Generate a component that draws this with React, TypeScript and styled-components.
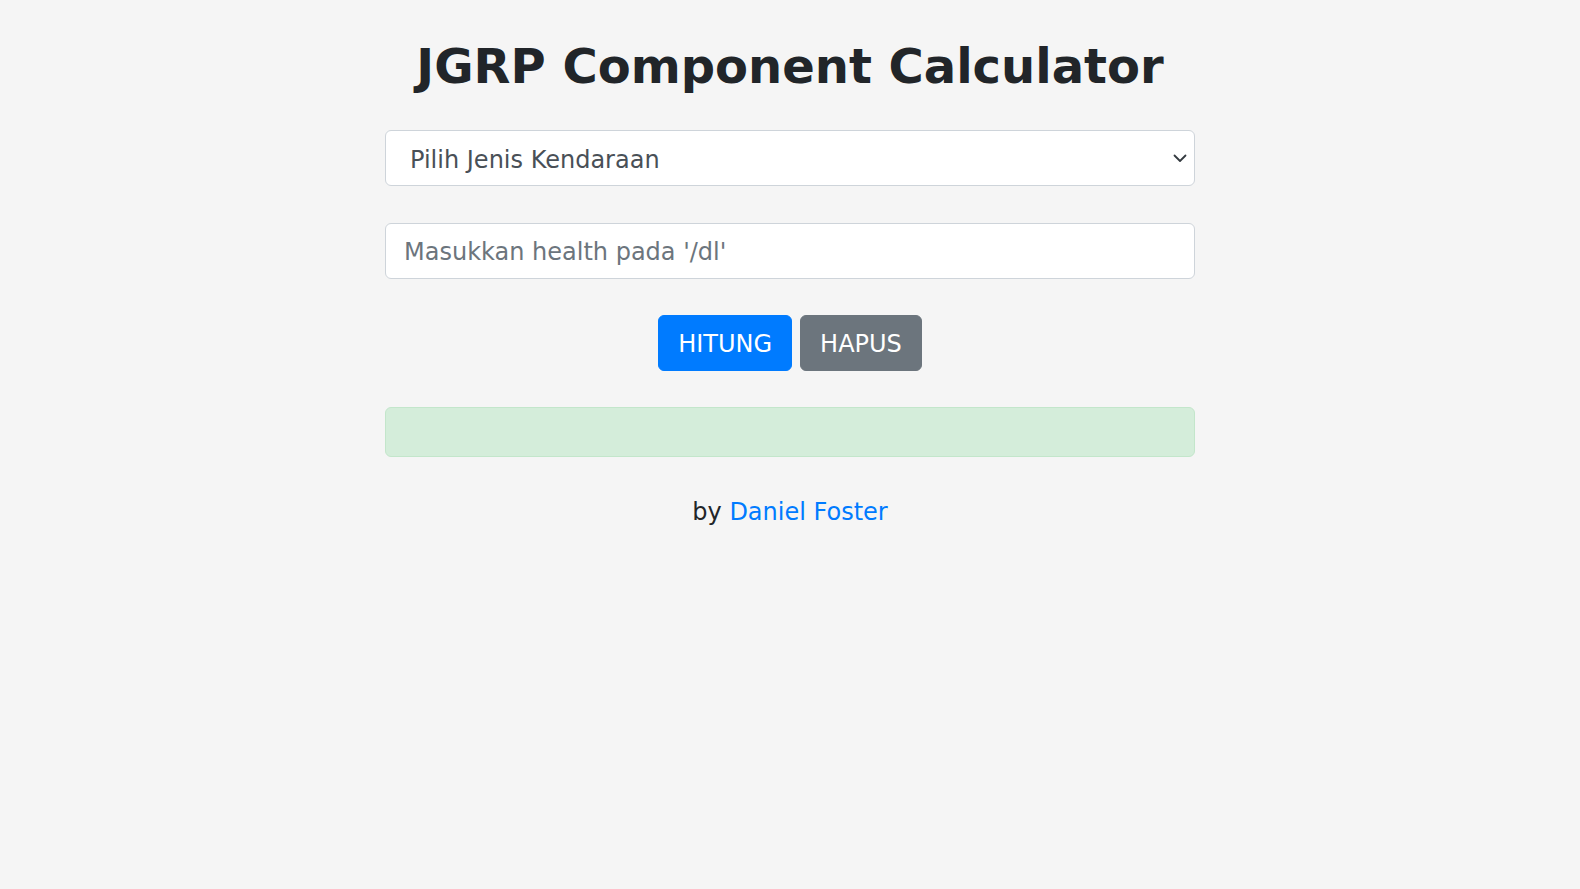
import React, { useState } from 'react';
import styled, { createGlobalStyle } from 'styled-components';

const GlobalStyle = createGlobalStyle`
  html, body {
    margin: 0;
    padding: 0;
    background: #f5f5f5;
    font-family: "DejaVu Sans", Verdana, sans-serif;
    color: #212529;
  }
  * { box-sizing: border-box; }
`;

const Page = styled.main`
  min-height: 100vh;
  display: flex;
  justify-content: center;
  padding-top: 38px;
`;

const Container = styled.div`
  width: 810px;
  display: flex;
  flex-direction: column;
`;

const Title = styled.h1`
  margin: 0 0 34px;
  font-size: 48px;
  line-height: 1.2;
  font-weight: 700;
  text-align: center;
  color: #212529;
`;

const SelectWrap = styled.div`
  position: relative;
  margin-bottom: 37px;
`;

const Select = styled.select`
  appearance: none;
  width: 100%;
  height: 56px;
  padding: 11px 40px 7px 24px;
  font-family: inherit;
  font-size: 24px;
  line-height: 1.5;
  color: #495057;
  background: #fff;
  border: 1px solid #ced4da;
  border-radius: 6px;
`;

const Chevron = styled.svg`
  position: absolute;
  right: 7px;
  top: 50%;
  width: 16px;
  height: 16px;
  transform: translateY(-50%);
  pointer-events: none;
`;

const Input = styled.input`
  width: 100%;
  height: 56px;
  padding: 10px 18px 8px;
  font-family: inherit;
  font-size: 24px;
  line-height: 1.5;
  color: #495057;
  background: #fff;
  border: 1px solid #ced4da;
  border-radius: 6px;
  margin-bottom: 36px;

  &::placeholder {
    color: #6c757d;
  }
`;

const Buttons = styled.div`
  display: flex;
  justify-content: center;
  gap: 8px;
  margin-bottom: 36px;
`;

const Button = styled.button<{ $variant: 'primary' | 'secondary' }>`
  height: 56px;
  padding: 10px 19px 8px;
  font-family: inherit;
  font-size: 24px;
  line-height: 1.5;
  color: #fff;
  border-radius: 6px;
  cursor: pointer;
  background: ${(p) => (p.$variant === 'primary' ? '#007bff' : '#6c757d')};
  border: 1px solid ${(p) => (p.$variant === 'primary' ? '#007bff' : '#6c757d')};
`;

const Result = styled.div`
  height: 50px;
  padding: 12px 24px;
  background: #d4edda;
  border: 1px solid #c3e6cb;
  border-radius: 6px;
  color: #155724;
  font-size: 24px;
  margin-bottom: 37px;
`;

const Footer = styled.p`
  margin: 0;
  text-align: center;
  font-size: 24px;
  line-height: 1.5;
  color: #212529;
`;

const Link = styled.a`
  color: #007bff;
  text-decoration: none;
`;

export default function App() {
  const [vehicle, setVehicle] = useState('');
  const [health, setHealth] = useState('');
  const [result, setResult] = useState('');

  return (
    <>
      <GlobalStyle />
      <Page>
        <Container>
          <Title>JGRP Component Calculator</Title>
          <SelectWrap>
            <Select value={vehicle} onChange={(e) => setVehicle(e.target.value)}>
              <option value="">Pilih Jenis Kendaraan</option>
              <option value="motor">Motor</option>
              <option value="mobil">Mobil</option>
            </Select>
            <Chevron viewBox="0 0 16 16" fill="none" stroke="#343a40" strokeWidth="1.8" strokeLinecap="round" strokeLinejoin="round">
              <path d="M2.5 5.5l5.5 5.5 5.5-5.5" />
            </Chevron>
          </SelectWrap>
          <Input
            type="text"
            placeholder="Masukkan health pada '/dl'"
            value={health}
            onChange={(e) => setHealth(e.target.value)}
          />
          <Buttons>
            <Button $variant="primary" onClick={() => setResult(health)}>HITUNG</Button>
            <Button $variant="secondary" onClick={() => { setHealth(''); setResult(''); }}>HAPUS</Button>
          </Buttons>
          <Result>{result}</Result>
          <Footer>
            by <Link href="#">Daniel Foster</Link>
          </Footer>
        </Container>
      </Page>
    </>
  );
}
